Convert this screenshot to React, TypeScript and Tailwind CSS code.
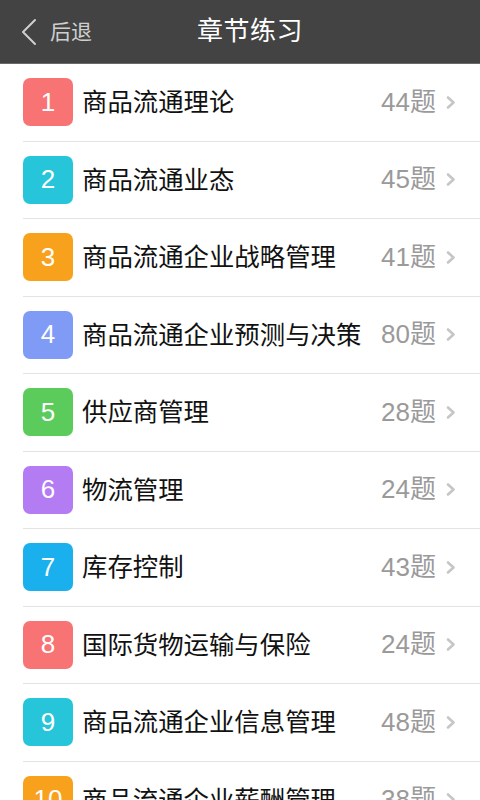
const chapters = [
  { no: 1, title: "商品流通理论", count: 44, bg: "bg-[#f87474]" },
  { no: 2, title: "商品流通业态", count: 45, bg: "bg-[#27c5d9]" },
  { no: 3, title: "商品流通企业战略管理", count: 41, bg: "bg-[#f8a11c]" },
  { no: 4, title: "商品流通企业预测与决策", count: 80, bg: "bg-[#7f9bf6]" },
  { no: 5, title: "供应商管理", count: 28, bg: "bg-[#5bcb5b]" },
  { no: 6, title: "物流管理", count: 24, bg: "bg-[#b37cf3]" },
  { no: 7, title: "库存控制", count: 43, bg: "bg-[#1ab0ee]" },
  { no: 8, title: "国际货物运输与保险", count: 24, bg: "bg-[#f87474]" },
  { no: 9, title: "商品流通企业信息管理", count: 48, bg: "bg-[#27c5d9]" },
  { no: 10, title: "商品流通企业薪酬管理", count: 38, bg: "bg-[#f8a11c]" },
];

const font = { fontFamily: '"Liberation Sans", "Noto Sans CJK SC", sans-serif' };

const Chevron = ({ className }: { className?: string }) => (
  <svg viewBox="0 0 10 13" className={className} fill="none" stroke="currentColor" strokeWidth={2.6} strokeLinecap="round" strokeLinejoin="round">
    <path d="M2 1.5l5.5 5-5.5 5" />
  </svg>
);

export default function App() {
  return (
    <div className="w-[480px] h-[800px] overflow-hidden bg-white" style={font}>
      {/* Header */}
      <div className="relative h-16 bg-[#434343] border-b border-[#6a6a6a] flex items-center">
        <div className="flex items-center pl-5 gap-3 text-[#cfcfcf]">
          <svg viewBox="0 0 18 28" className="w-[18px] h-[28px]" fill="none" stroke="currentColor" strokeWidth={2} strokeLinecap="round" strokeLinejoin="round">
            <path d="M15 2L3 14l12 12" />
          </svg>
          <span className="text-[21px]">后退</span>
        </div>
        <div className="absolute left-[197px] top-0 h-full flex items-center text-white text-[26px] tracking-[0.5px]">
          章节练习
        </div>
      </div>

      {/* Chapter list */}
      <div className="pl-[23px]">
        {chapters.map((c) => (
          <div key={c.no} className="h-[77.5px] border-b border-[#e3e3e3] flex items-center">
            <div className={`${c.bg} w-[50px] h-[48px] rounded-[7px] flex items-center justify-center text-white text-[26px] shrink-0`}>
              {c.no}
            </div>
            <span className="ml-[9px] flex-1 text-[25.4px] text-[#111] whitespace-nowrap">{c.title}</span>
            <span className="text-[26px] text-[#9a9a9a] whitespace-nowrap">{c.count}题</span>
            <Chevron className="w-[10px] h-[13px] ml-[10px] mr-[24px] text-[#c6c6c6]" />
          </div>
        ))}
      </div>
    </div>
  );
}
